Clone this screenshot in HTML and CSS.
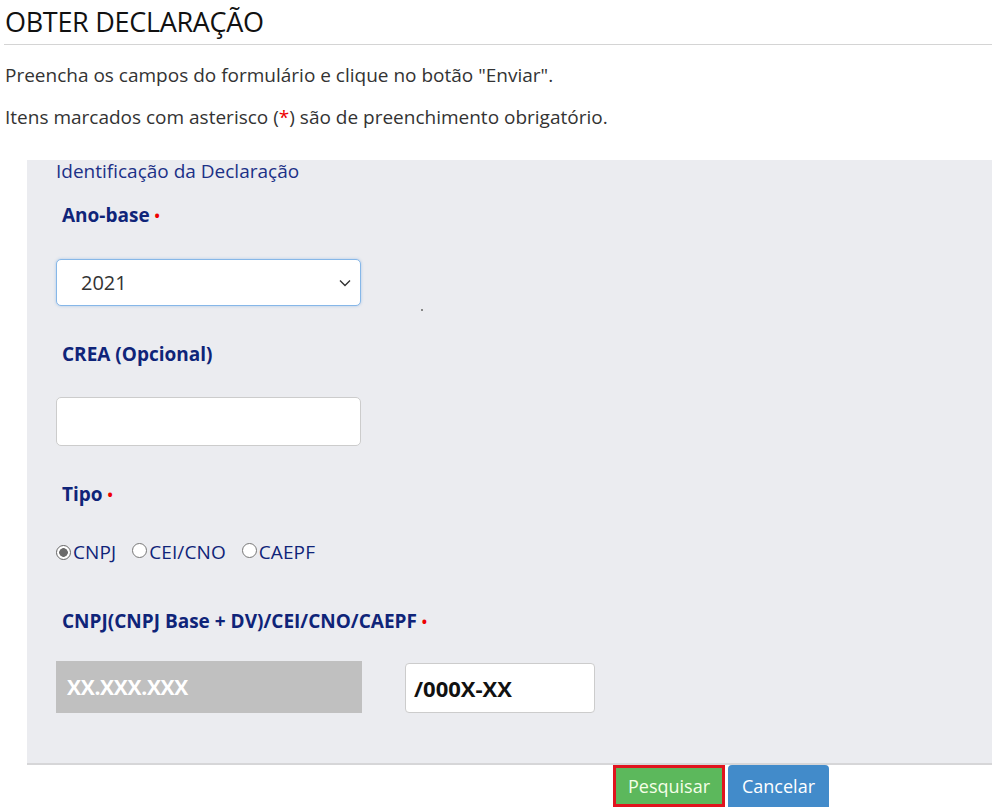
FILE: index.html
```html
<!DOCTYPE html>
<html lang="pt-BR">
<head>
<meta charset="utf-8">
<title>Obter Declaração</title>
<link rel="stylesheet" href="styles.css">
</head>
<body>
<div class="page">
  <h1 class="title">OBTER DECLARAÇÃO</h1>
  <hr class="rule">
  <p class="intro first">Preencha os campos do formulário e clique no botão "Enviar".</p>
  <p class="intro">Itens marcados com asterisco (<span class="req">*</span>) são de preenchimento obrigatório.</p>

  <form class="panel">
    <div class="legend">Identificação da Declaração</div>

    <div class="field">
      <label class="label label-first">Ano-base <span class="dot">•</span></label>
      <div class="row-select">
        <div class="select">
          <span>2021</span>
          <svg class="chev" width="12" height="8" viewBox="0 0 12 8"><path d="M1 1.5 L6 6.5 L11 1.5" fill="none" stroke="#333" stroke-width="1.4"/></svg>
        </div>
        <span class="speck"></span>
      </div>
    </div>

    <div class="field">
      <label class="label">CREA (Opcional)</label>
      <div class="input"></div>
    </div>

    <div class="field">
      <label class="label">Tipo <span class="dot">•</span></label>
      <div class="radios">
        <span class="radio checked"></span><span class="rlabel gap">CNPJ</span>
        <span class="radio"></span><span class="rlabel gap">CEI/CNO</span>
        <span class="radio"></span><span class="rlabel">CAEPF</span>
      </div>
    </div>

    <div class="field">
      <label class="label label-wide">CNPJ(CNPJ Base + DV)/CEI/CNO/CAEPF <span class="dot">•</span></label>
      <div class="cnpj">
        <div class="base">XX.XXX.XXX</div>
        <div class="suffix">/000X-XX</div>
      </div>
    </div>
  </form>

  <div class="actions">
    <button type="button" class="btn btn-ok">Pesquisar</button>
    <button type="button" class="btn btn-cancel">Cancelar</button>
  </div>
</div>
</body>
</html>
```

FILE: styles.css
```css
html, body {
  margin: 0;
  padding: 0;
  background: #fff;
}
body {
  font-family: "Open Sans", "Noto Sans", sans-serif;
  color: #333;
}
.page {
  width: 988px;
  padding-left: 4px;
}
.title {
  margin: 0;
  padding: 5px 0 0 1px;
  font-size: 27px;
  font-weight: 400;
  line-height: 34px;
  color: #111;
  letter-spacing: -0.3px;
}
.rule {
  margin: 5px 0 0 0;
  border: 0;
  border-top: 1px solid #d4d4d4;
  height: 0;
}
.intro {
  margin: 0;
  padding-left: 1px;
  font-size: 19px;
  line-height: 42px;
  color: #333;
}
.intro.first {
  margin-top: 9px;
}
.req { color: #e00; }

.panel {
  margin: 22px 0 0 23px;
  background: #ebecf0;
  border-bottom: 2px solid #d6d6d8;
  padding: 0 0 50px 29px;
}
.legend {
  font-size: 19px;
  line-height: 22px;
  color: #1c3187;
}
.field {
  display: flex;
  flex-direction: column;
}
.label {
  margin: 35px 0 0 6px;
  font-size: 19px;
  font-weight: 700;
  line-height: 26px;
  color: #0f2479;
}
.label-first {
  margin-top: 20px;
}
.dot {
  color: #e00;
  font-size: 14px;
  vertical-align: 1px;
}
.row-select {
  display: flex;
  align-items: flex-end;
  margin-top: 30px;
}
.select {
  box-sizing: border-box;
  width: 305px;
  height: 47px;
  background: #fff;
  border: 1px solid #86b7e8;
  border-radius: 5px;
  box-shadow: 0 0 3px rgba(90, 150, 220, 0.45);
  display: flex;
  align-items: center;
  justify-content: space-between;
  padding: 0 9px 0 24px;
  font-size: 20px;
  color: #333;
}
.speck {
  width: 2px;
  height: 2px;
  background: #888;
  margin: 0 0 -5px 60px;
}
.input {
  box-sizing: border-box;
  width: 305px;
  height: 49px;
  margin-top: 30px;
  background: #fff;
  border: 1px solid #ccc;
  border-radius: 5px;
}
.radios {
  display: flex;
  align-items: center;
  margin-top: 31px;
  font-size: 19px;
  line-height: 26px;
  color: #0f2479;
}
.radio {
  box-sizing: border-box;
  width: 15px;
  height: 15px;
  border: 1px solid #777;
  border-radius: 50%;
  background: #fff;
  margin: -4px 2px 0 0;
}
.radio.checked {
  margin-top: 0;
  border: 1px solid #666;
  background: radial-gradient(circle, #6b6b6b 0 4px, #fff 4.6px);
}
.rlabel { letter-spacing: 0.1px; }
.gap { margin-right: 16px; }
.label-wide {
  margin-top: 43px;
}

.cnpj {
  display: flex;
  align-items: flex-end;
  margin-top: 26px;
}
.base {
  box-sizing: border-box;
  width: 306px;
  height: 52px;
  background: #c0c0c0;
  color: #fff;
  font-size: 21px;
  font-weight: 700;
  letter-spacing: -0.3px;
  line-height: 52px;
  padding-left: 11px;
}
.suffix {
  box-sizing: border-box;
  width: 190px;
  height: 50px;
  margin-left: 43px;
  background: #fff;
  border: 1px solid #ccc;
  border-radius: 4px;
  color: #111;
  font-size: 22px;
  font-weight: 700;
  line-height: 48px;
  padding-left: 8px;
}

.actions {
  display: flex;
  margin: 0 0 0 609px;
  gap: 3px;
}
.btn {
  font-family: "Open Sans", "Noto Sans", sans-serif;
  font-size: 18px;
  color: #fff;
  height: 42px;
  border: 0;
  padding: 0;
  cursor: pointer;
}
.btn-ok {
  background: #5cb85c;
  border: 3px solid #e0141e;
  width: 112px;
  color: #f5ffe8;
}
.btn-cancel {
  background: #428bca;
  border-radius: 4px 4px 0 0;
  width: 101px;
}
```
